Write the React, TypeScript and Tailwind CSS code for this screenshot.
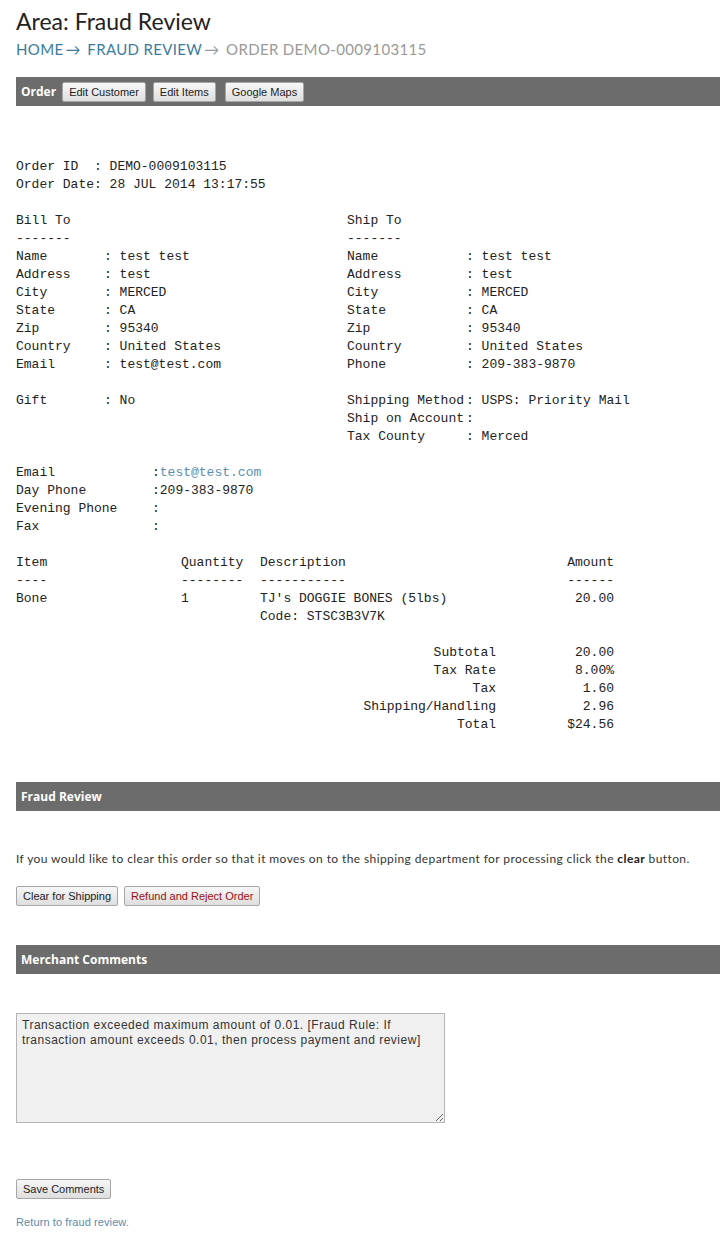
import React from 'react'

const mono = { fontFamily: '"Liberation Mono", "Courier New", monospace' }

const Btn = ({ children, danger, className = '' }: { children: React.ReactNode; danger?: boolean; className?: string }) => (
  <button
    className={`h-[20px] px-[6px] border border-[#a6a6a6] rounded-[2px] bg-gradient-to-b from-[#f7f7f7] to-[#dedede] text-[11px] leading-[18px] font-['Liberation_Sans',Arial,sans-serif] ${danger ? 'text-[#9b1111]' : 'text-[#222]'} ${className}`}
  >
    {children}
  </button>
)

const Bar = ({ children }: { children: React.ReactNode }) => (
  <div className="ml-4 h-[29px] bg-[#6c6c6c] flex items-center pl-[5px]">{children}</div>
)

const BarTitle = ({ children }: { children: React.ReactNode }) => (
  <span className="text-white font-bold text-[12px] font-['Open_Sans',sans-serif]">{children}</span>
)

const Row = ({ label, value, w }: { label: string; value?: React.ReactNode; w: string }) => (
  <div className="flex h-[18px] whitespace-pre">
    <span className={w}>{label}</span>
    {value !== undefined && <span>: {value}</span>}
  </div>
)

const Line = ({ children }: { children?: React.ReactNode }) => (
  <div className="h-[18px] whitespace-pre">{children}</div>
)

const billTo: [string, string][] = [
  ['Name', 'test test'],
  ['Address', 'test'],
  ['City', 'MERCED'],
  ['State', 'CA'],
  ['Zip', '95340'],
  ['Country', 'United States'],
  ['Email', 'test@test.com'],
]

const shipTo: [string, string][] = [
  ['Name', 'test test'],
  ['Address', 'test'],
  ['City', 'MERCED'],
  ['State', 'CA'],
  ['Zip', '95340'],
  ['Country', 'United States'],
  ['Phone', '209-383-9870'],
]

const totals: [string, string][] = [
  ['Subtotal', '20.00'],
  ['Tax Rate', '8.00%'],
  ['Tax', '1.60'],
  ['Shipping/Handling', '2.96'],
  ['Total', '$24.56'],
]

export default function App() {
  return (
    <div className="w-[720px] bg-white text-[#333] pb-4">
      <div className="pl-4">
        <h1 className="text-[23px] leading-[30px] pt-[6px] text-[#222] font-['Lato',sans-serif]">Area: Fraud Review</h1>
        <div className="mt-[4px] text-[15px] leading-[18px] tracking-[0.35px] uppercase font-['Lato',sans-serif]">
          <span className="text-[#3b7ba0]">Home</span>
          <span className="text-[#3b7ba0] tracking-normal ml-[2px]">&rarr; </span>
          <span className="text-[#3b7ba0] ml-[3px]">Fraud Review</span>
          <span className="text-[#999] tracking-normal ml-[2px]">&rarr; </span>
          <span className="text-[#999] ml-[3px]">Order DEMO-0009103115</span>
        </div>
      </div>

      <div className="mt-[19px]">
        <Bar>
          <BarTitle>Order</BarTitle>
          <Btn className="ml-[6px]">Edit Customer</Btn>
          <Btn className="ml-[7px]">Edit Items</Btn>
          <Btn className="ml-[9px]">Google Maps</Btn>
        </Bar>
      </div>

      <div className="ml-4 mt-[52px] text-[13px] leading-[18px] text-[#222]" style={mono}>
        <Line>Order ID  : DEMO-0009103115</Line>
        <Line>Order Date: 28 JUL 2014 13:17:55</Line>
        <Line />
        <div className="flex">
          <div className="w-[331px]">
            <Line>Bill To</Line>
            <Line>-------</Line>
            {billTo.map(([l, v]) => (
              <Row key={l} label={l} value={v} w="w-[88px]" />
            ))}
            <Line />
            <Row label="Gift" value="No" w="w-[88px]" />
          </div>
          <div>
            <Line>Ship To</Line>
            <Line>-------</Line>
            {shipTo.map(([l, v]) => (
              <Row key={l} label={l} value={v} w="w-[119px]" />
            ))}
            <Line />
            <Row label="Shipping Method" value="USPS: Priority Mail" w="w-[119px]" />
            <div className="flex h-[18px] whitespace-pre">
              <span className="w-[119px]">Ship on Account</span>
              <span>:</span>
            </div>
            <Row label="Tax County" value="Merced" w="w-[119px]" />
          </div>
        </div>
        <Line />
        <div className="flex h-[18px]">
          <span className="w-[136px]">Email</span>
          <span>:</span>
          <a className="text-[#5b8db3]">test@test.com</a>
        </div>
        <div className="flex h-[18px]">
          <span className="w-[136px]">Day Phone</span>
          <span>:209-383-9870</span>
        </div>
        <div className="flex h-[18px]">
          <span className="w-[136px]">Evening Phone</span>
          <span>:</span>
        </div>
        <div className="flex h-[18px]">
          <span className="w-[136px]">Fax</span>
          <span>:</span>
        </div>
        <Line />

        <div className="w-[598px]">
          <div className="flex h-[18px]">
            <span className="w-[165px]">Item</span>
            <span className="w-[79px]">Quantity</span>
            <span className="flex-1">Description</span>
            <span>Amount</span>
          </div>
          <div className="flex h-[18px]">
            <span className="w-[165px]">----</span>
            <span className="w-[79px]">--------</span>
            <span className="flex-1">-----------</span>
            <span>------</span>
          </div>
          <div className="flex h-[18px]">
            <span className="w-[165px]">Bone</span>
            <span className="w-[79px]">1</span>
            <span className="flex-1">TJ's DOGGIE BONES (5lbs)</span>
            <span>20.00</span>
          </div>
          <div className="flex h-[18px]">
            <span className="w-[244px]" />
            <span>Code: STSC3B3V7K</span>
          </div>
          <Line />
          {totals.map(([l, v]) => (
            <div key={l} className="flex h-[18px]">
              <span className="w-[480px] text-right">{l}</span>
              <span className="flex-1 text-right">{v}</span>
            </div>
          ))}
        </div>
      </div>

      <div className="mt-[48px]">
        <Bar>
          <BarTitle>Fraud Review</BarTitle>
        </Bar>
      </div>

      <p className="ml-4 mt-[39px] text-[12px] leading-[18px] tracking-[0.4px] text-[#333] font-['Lato',sans-serif]">
        If you would like to clear this order so that it moves on to the shipping department for processing click the{' '}
        <b className="font-bold text-[#222]">clear</b> button.
      </p>

      <div className="ml-4 mt-[18px] flex gap-[6px]">
        <Btn>Clear for Shipping</Btn>
        <Btn danger>Refund and Reject Order</Btn>
      </div>

      <div className="mt-[39px]">
        <Bar>
          <BarTitle>Merchant Comments</BarTitle>
        </Bar>
      </div>

      <div className="ml-4 mt-[39px]">
        <textarea
          readOnly
          defaultValue="Transaction exceeded maximum amount of 0.01. [Fraud Rule: If transaction amount exceeds 0.01, then process payment and review]"
          className="block w-[429px] h-[110px] bg-[#f0f0f0] border border-[#b5b5b5] px-[5px] py-[4px] text-[12px] leading-[15px] tracking-[0.5px] text-[#333] font-['Liberation_Sans',Arial,sans-serif] outline-none resize-y"
        />
      </div>

      <div className="ml-4 mt-[52px]">
        <Btn>Save Comments</Btn>
      </div>

      <a className="block ml-4 mt-[16px] text-[11px] leading-[14px] tracking-[0.1px] text-[#5b8aad] font-['Liberation_Sans',Arial,sans-serif]">
        Return to fraud review.
      </a>
    </div>
  )
}
